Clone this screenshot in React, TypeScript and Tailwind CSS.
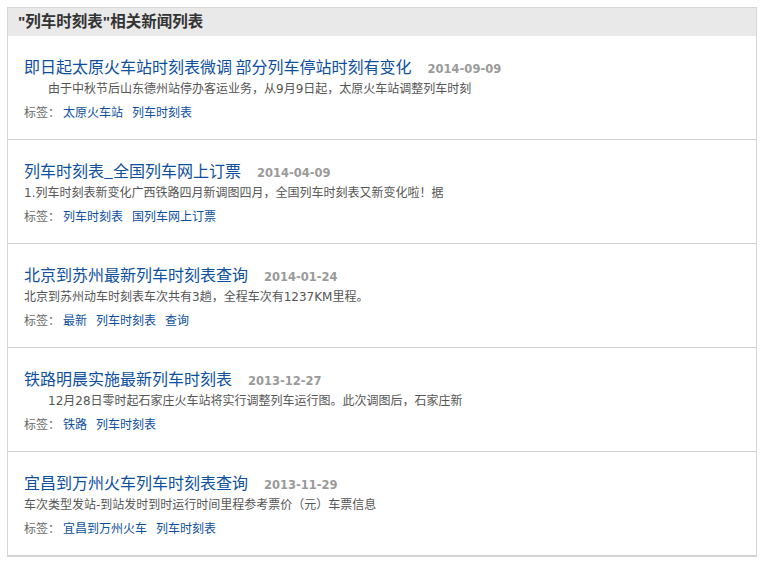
import React from "react";

type Item = {
  title: string;
  date: string;
  summary: string;
  indent: boolean;
  tags: string[];
};

const items: Item[] = [
  {
    title: "即日起太原火车站时刻表微调 部分列车停站时刻有变化",
    date: "2014-09-09",
    summary: "由于中秋节后山东德州站停办客运业务，从9月9日起，太原火车站调整列车时刻",
    indent: true,
    tags: ["太原火车站", "列车时刻表"],
  },
  {
    title: "列车时刻表_全国列车网上订票",
    date: "2014-04-09",
    summary: "1.列车时刻表新变化广西铁路四月新调图四月，全国列车时刻表又新变化啦！据",
    indent: false,
    tags: ["列车时刻表", "国列车网上订票"],
  },
  {
    title: "北京到苏州最新列车时刻表查询",
    date: "2014-01-24",
    summary: "北京到苏州动车时刻表车次共有3趟，全程车次有1237KM里程。",
    indent: false,
    tags: ["最新", "列车时刻表", "查询"],
  },
  {
    title: "铁路明晨实施最新列车时刻表",
    date: "2013-12-27",
    summary: "12月28日零时起石家庄火车站将实行调整列车运行图。此次调图后，石家庄新",
    indent: true,
    tags: ["铁路", "列车时刻表"],
  },
  {
    title: "宜昌到万州火车列车时刻表查询",
    date: "2013-11-29",
    summary: "车次类型发站-到站发时到时运行时间里程参考票价（元）车票信息",
    indent: false,
    tags: ["宜昌到万州火车", "列车时刻表"],
  },
];

export default function App() {
  return (
    <div className="w-[761px] h-[562px] overflow-hidden bg-white font-['Tahoma','DejaVu_Sans','Noto_Sans_CJK_SC',sans-serif]">
      <div className="ml-[7px] mt-[7px] w-[750px] border border-[#d6d6da]">
        <div className="h-[28px] bg-[#e9e9e9] pl-[10px] text-[15.5px] font-bold leading-[28px] text-[#333] font-['Liberation_Sans','Noto_Sans_CJK_SC',sans-serif]">
          "列车时刻表"相关新闻列表
        </div>
        {items.map((it, i) => (
          <div
            key={i}
            className="h-[104px] border-b border-[#d0d0d0] pl-[16px] pt-[18px]"
          >
            <div className="flex items-baseline h-[24px]">
              <span className="text-[16px] leading-[24px] text-[#0d4f9e] font-['Noto_Sans_CJK_SC',sans-serif]">
                {it.title}
              </span>
              <span className="ml-[16px] text-[11.5px] font-bold text-[#9a9a9a] font-['DejaVu_Sans',sans-serif]">
                {it.date}
              </span>
            </div>
            <div
              className={
                "h-[22px] text-[12px] leading-[22px] text-[#555] font-['DejaVu_Sans','Noto_Sans_CJK_SC',sans-serif] " +
                (it.indent ? "pl-[24px]" : "")
              }
            >
              {it.summary}
            </div>
            <div className="flex h-[24px] items-center text-[12px] font-['Noto_Sans_CJK_SC',sans-serif]">
              <span className="text-[#666]">标签：</span>
              <div className="ml-[3px] flex gap-[9px]">
                {it.tags.map((t) => (
                  <span key={t} className="text-[#0d4f9e]">
                    {t}
                  </span>
                ))}
              </div>
            </div>
          </div>
        ))}
      </div>
    </div>
  );
}
